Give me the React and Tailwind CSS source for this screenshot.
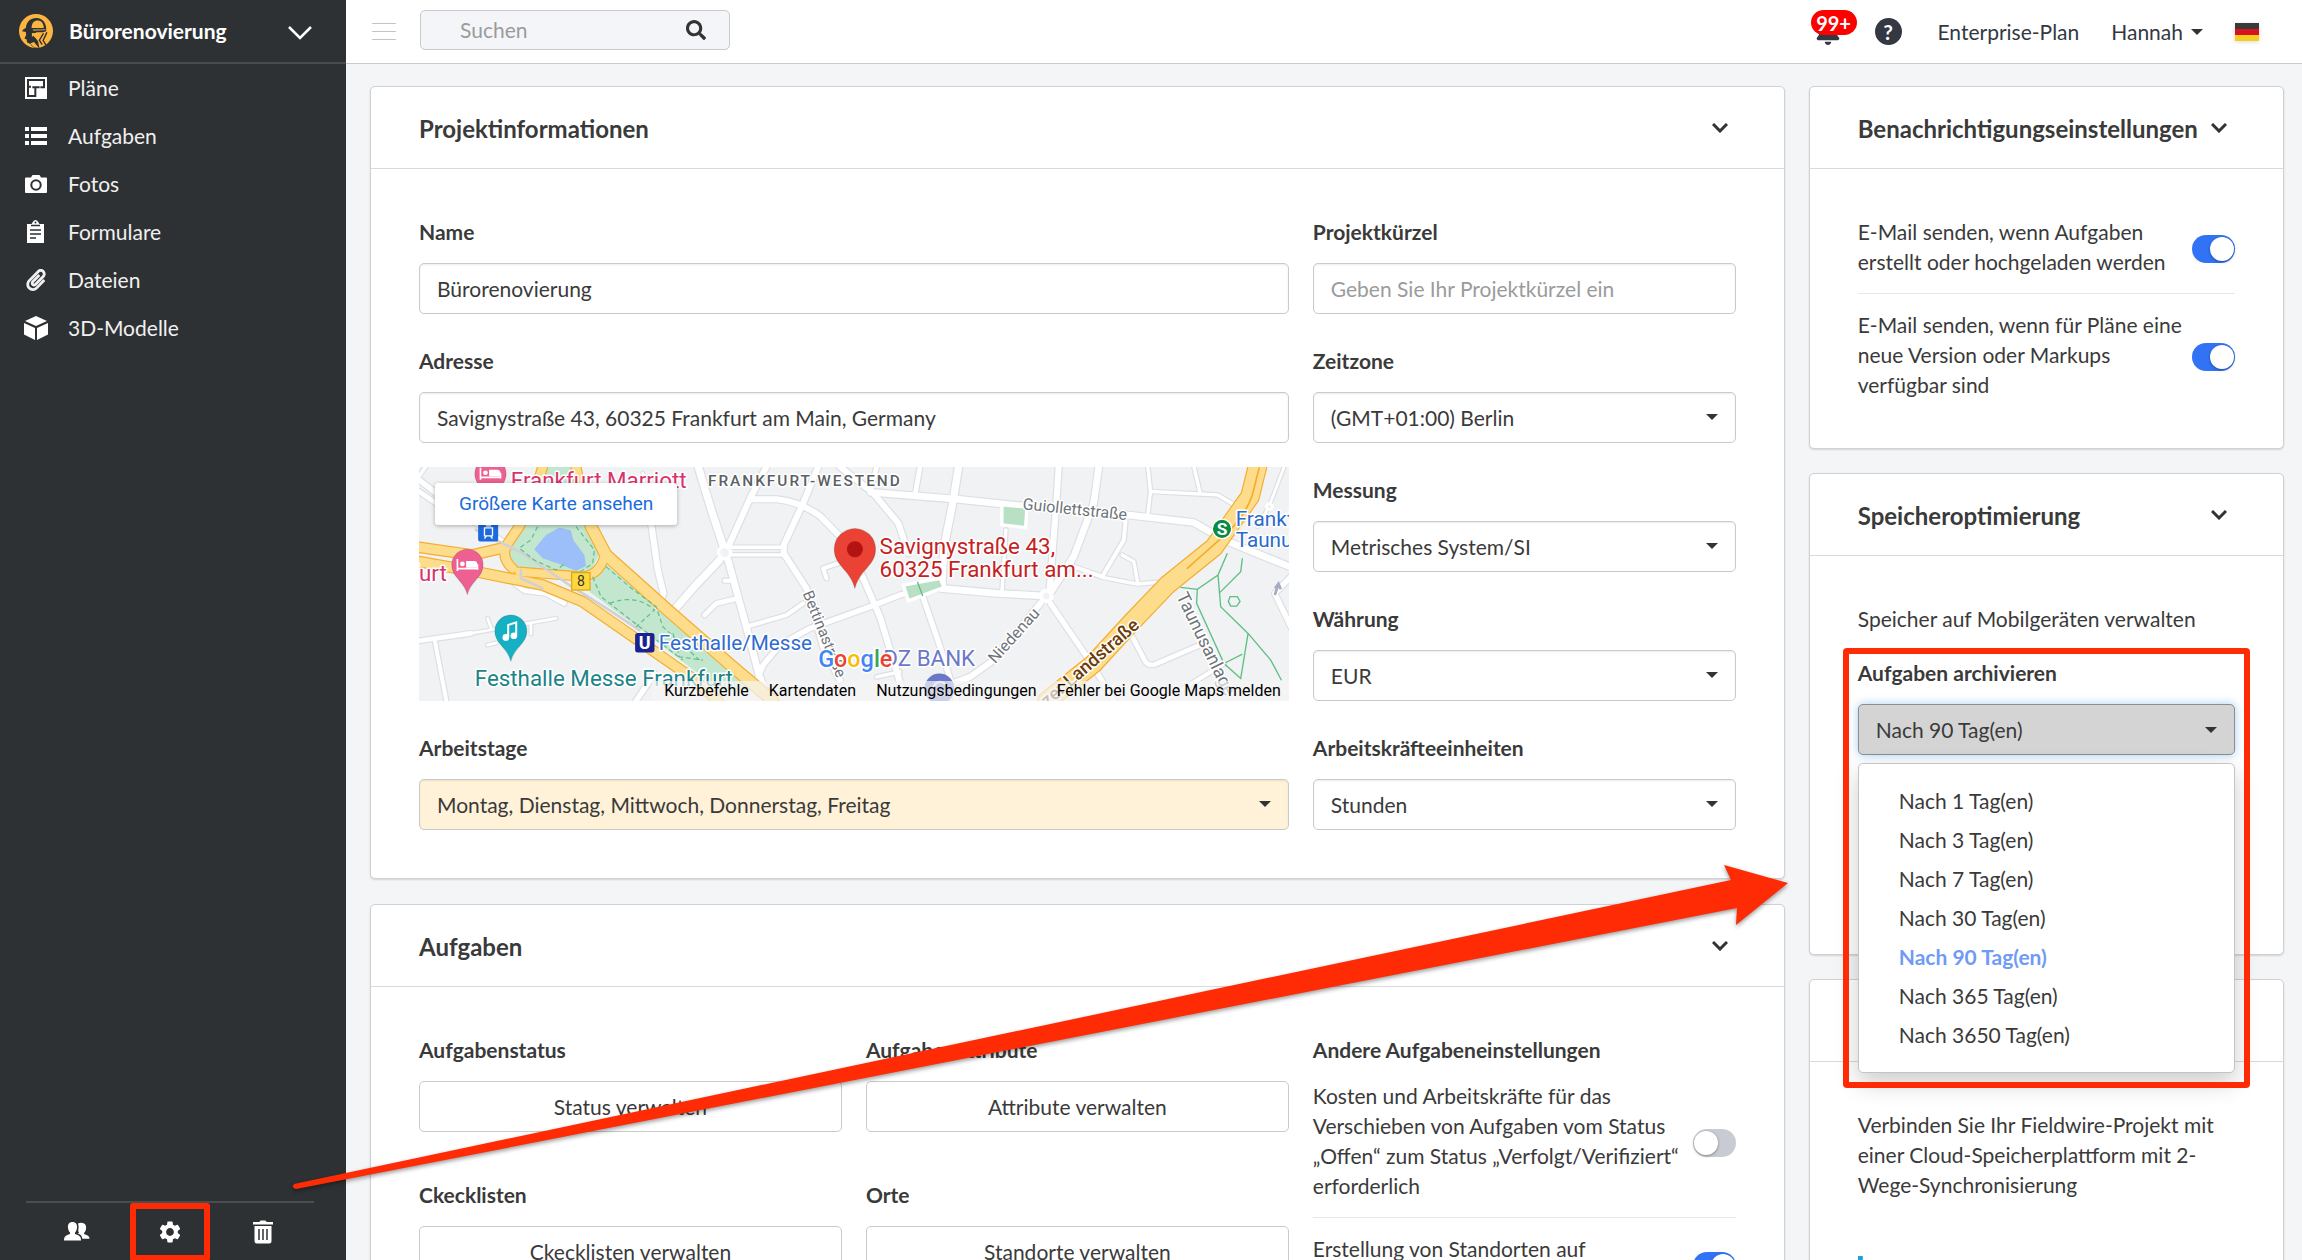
import React from "react";
import { FaSearch, FaPaperclip, FaBell } from "react-icons/fa";
import { MdSettings } from "react-icons/md";

/* ---------- Icons ---------- */

const LogoIcon = () => (
  <svg viewBox="0 0 100 100" className="size-[34px] shrink-0" aria-hidden="true">
    <circle cx="50" cy="50" r="50" fill="#fbb540" />
    <path d="M9 51Q12 43 20 41C22 22 36 11 52 12C70 13 79 27 80 42L80 51L70 54L52 54L44 58L46 66L56 80L60 100Q40 102 34 88L24 84L22 74L16 72L21 62L20 53Z" fill="#2e3134" />
    <path d="M37 41C37 26 45 19 55 19C67 19 72 29 73 41Z" fill="#fbb540" />
    <path d="M40 45L78 44L78 48L42 50Z" fill="#a9813c" />
    <path d="M38 56L70 57L60 68L56 78L42 64L38 68Z" fill="#fbb540" />
    <path d="M72 57L60 77L68 90M82 54L71 78L80 92" stroke="#2e3134" strokeWidth="4" fill="none" />
    <path d="M34 86L44 82L58 99Q42 101 34 86Z" fill="#fbb540" />
  </svg>
);

const PlanIcon = () => (
  <svg viewBox="0 0 66 66" className="size-[22px]" aria-hidden="true">
    <path d="M0 0H66V66H0Z" fill="#fff" />
    <path d="M6 6H60V34H46V28H54V12H12V26H18V32H12V54H28V34H22V28H44V34H34V60H6Z" fill="#2e3134" />
  </svg>
);

const ListIcon = () => (
  <svg viewBox="0 0 22 22" className="size-[22px]" fill="#fff" aria-hidden="true">
    <path d="M0 2h4v4H0zM6 2h16v4H6zM0 9h4v4H0zM6 9h16v4H6zM0 16h4v4H0zM6 16h16v4H6z" />
  </svg>
);

const CameraIcon = () => (
  <svg viewBox="0 0 22 22" className="size-[22px]" aria-hidden="true">
    <path fill="#fff" d="M1 4.500H6L7.500 2H14.500L16 4.500H21Q22 4.500 22 5.500V19Q22 20 21 20H1Q0 20 0 19V5.500Q0 4.500 1 4.500Z" />
    <circle cx="11" cy="12" r="4.700" fill="#fff" stroke="#2e3134" strokeWidth="2" />
  </svg>
);

const ClipboardIcon = () => (
  <svg viewBox="0 0 22 24" className="h-[24px] w-[22px]" aria-hidden="true">
    <path fill="#fff" d="M2 4H6Q7 4 7.500 2.500Q8.500 0 10.500 0Q12.500 0 13.500 2.500Q14 4 15 4H19V23H2Z" />
    <path d="M6 5.500H15M5 10H16M5 14H16M5 18H11" stroke="#2e3134" strokeWidth="1.600" />
    <circle cx="10.500" cy="2.600" r="1" fill="#2e3134" />
  </svg>
);

const CubeIcon = () => (
  <svg viewBox="0 0 24 24" className="size-[24px]" fill="#fff" aria-hidden="true">
    <path d="M12 0L23 5L12 10L1 5ZM0 7L11 12V24L0 18.500ZM24 7L13 12V24L24 18.500Z" />
  </svg>
);

const UsersIcon = () => (
  <svg viewBox="0 0 26 19" className="h-[19px] w-[26px]" fill="#fff" aria-hidden="true">
    <path d="M0 18.500C0 14 2 13.500 6 12V10.500C4.500 9 4.400 7.500 4 6C3.500 2 5.500 0 8.500 0S13.500 2 13 6C12.600 7.500 12.500 9 11 10.500V12C15 13.500 17 14 17 18.500Z" />
    <path d="M14 1.600Q16 0.500 18.500 1C21.500 1.500 22.500 4 22 7C21.700 8.600 21.500 9.500 20 11V12C24 13.500 25.500 14 25.500 16.800H18.300C18 13.500 16.500 12.800 14 11.600Q14.200 11 15.200 10.600C13.600 9.600 14.500 8 14.600 5.500Q14.600 3 14 1.600Z" />
  </svg>
);

const TrashIcon = () => (
  <svg viewBox="0 0 20 24" className="h-[24px] w-[20px]" aria-hidden="true">
    <path fill="#fff" d="M6.500 2Q6.500 0.500 8 0.500H12Q13.500 0.500 13.500 2H20V4.500H0V2ZM1.500 6H18.500V21Q18.500 23.500 16 23.500H4Q1.500 23.500 1.500 21Z" />
    <path d="M6 9V20M10 9V20M14 9V20" stroke="#2e3134" strokeWidth="1.500" />
  </svg>
);

const FlagIcon = () => (
  <svg viewBox="0 0 24 18" className="h-[18px] w-[24px] drop-shadow-sm" aria-hidden="true">
    <path d="M0 0H24V6H0Z" fill="#3a3a3a" />
    <path d="M0 6H24V12H0Z" fill="#d9131c" />
    <path d="M0 12H24V18H0Z" fill="#f6cf1c" />
  </svg>
);

const Caret = ({ className = "" }) => (
  <svg viewBox="0 0 12 6" className={`h-[6px] w-[12px] ${className}`} fill="#333" aria-hidden="true">
    <path d="M0 0H12L6 6Z" />
  </svg>
);

const Chevron = () => (
  <svg viewBox="0 0 16 10" className="h-[10px] w-[16px]" fill="none" stroke="#333" strokeWidth="3" aria-hidden="true">
    <path d="M1 1L8 8L15 1" />
  </svg>
);

/* ---------- Form parts ---------- */

const box = "h-[51px] w-full rounded-[5px] border border-[#c9cacc] bg-white px-[17px] text-[#3a3a3a]";

const Field = ({ id, label, children }) => (
  <div>
    <label htmlFor={id} className="mb-4 block font-bold">{label}</label>
    {children}
  </div>
);

const TextField = ({ id, label, ...rest }) => (
  <Field id={id} label={label}>
    <input id={id} type="text" className={`${box} shadow-[inset_0_1px_2px_rgba(0,0,0,0.08)] placeholder:text-[#9b9b9b]`} {...rest} />
  </Field>
);

const SelectField = ({ id, label, value, tint = false }) => (
  <Field id={id} label={label}>
    <div className="relative">
      <select id={id} className={`${box} appearance-none shadow-[inset_0_1px_2px_rgba(0,0,0,0.08)] ${tint ? "!bg-[#fff2d9]" : ""}`}>
        <option>{value}</option>
      </select>
      <Caret className="pointer-events-none absolute top-[22px] right-[18px]" />
    </div>
  </Field>
);

const ButtonField = ({ title, action }) => (
  <div>
    <h3 className="mb-4 font-bold">{title}</h3>
    <button type="button" className={`${box} text-center`}>{action}</button>
  </div>
);

const Toggle = ({ id, on = false }) => (
  <span className="relative mt-1 inline-flex h-[28px] w-[43px] shrink-0">
    <input id={id} type="checkbox" role="switch" defaultChecked={on} className="peer size-full appearance-none rounded-full bg-[#c8cbd1] checked:bg-[#3273f6]" />
    <span className="pointer-events-none absolute top-[2px] left-[1px] size-[24px] rounded-full bg-white shadow-[0_1px_3px_rgba(0,0,0,0.35)] peer-checked:left-[18px]" />
  </span>
);

const ToggleRow = ({ id, on, children, className = "" }) => (
  <div className={`flex items-center justify-between gap-2 ${className}`}>
    <label htmlFor={id} className="self-start">{children}</label>
    <Toggle id={id} on={on} />
  </div>
);

const Card = ({ title, children }) => (
  <section className="rounded-[5px] border border-[#cfd1d4] bg-white shadow-[0_1px_2px_rgba(0,0,0,0.14)]">
    <header className="flex h-[82px] items-center justify-between border-b border-[#d8dadc] pr-14 pl-12">
      <h2 className="pt-[2px] text-[24px] font-bold">{title}</h2>
      {title && (
        <button type="button" aria-label={`${title} einklappen`}>
          <Chevron />
        </button>
      )}
    </header>
    <div className="p-12">{children}</div>
  </section>
);

/* ---------- Map ---------- */

const roads = [
  [22, "M866 21L905 150L942 262"],
  [18, "M1070 21L1020 118L955 262"],
  [18, "M1020 118L1100 118Q1170 125 1230 168L1330 270"],
  [18, "M1225 21L1180 130L1122 255V280L1190 385L1240 560L1290 660"],
  [10, "M960 262H1120"],
  [10, "M960 285H1120"],
  [22, "M930 300L850 385L785 460"],
  [20, "M955 300L1010 500L1048 645L1080 722"],
  [12, "M945 362H970"],
  [18, "M1290 21L1390 100L1465 190L1495 280"],
  [20, "M1390 98L1640 118L1850 140L2150 165L2350 188L2440 240L2660 330"],
  [22, "M1645 21L1630 118L1602 260L1595 370"],
  [14, "M1530 21L1515 105"],
  [14, "M1400 21L1380 100"],
  [18, "M1945 21L1938 130L1918 390"],
  [20, "M2065 21L2050 130L1990 290L1922 395"],
  [10, "M2212 21L2220 95L2212 165"],
  [10, "M2220 95L2420 105L2480 140"],
  [10, "M2350 21L2368 98"],
  [12, "M2145 185L2140 240L2075 350L1990 320"],
  [10, "M2075 352L2180 372L2270 365"],
  [10, "M2135 285L2170 305L2182 370"],
  [20, "M1590 385L1760 400L1905 408"],
  [16, "M1380 440L1470 405L1600 370"],
  [18, "M1340 310L1410 470L1480 700"],
  [16, "M1540 415L1590 560L1640 722"],
  [18, "M1890 430L1750 600L1680 650L1600 680"],
  [16, "M1920 430L2050 620L2110 722"],
  [14, "M2160 520L2205 605Q2215 618 2235 612L2390 545"],
  [10, "M1787 210L1775 400"],
  [12, "M2260 722L2440 610"],
  [14, "M30 542L185 520"],
  [8, "M185 520L440 475M235 475L248 508M235 555L262 548M365 490V522"],
  [12, "M78 545L112 722"],
  [18, "M725 190L745 330L762 400L745 440"],
  [14, "M885 465L920 430L985 415"],
  [12, "M1010 500L1130 465L1180 430"],
  [16, "M1380 440L1200 505L1110 555L1060 615L1042 660"],
  [14, "M310 365L345 392L410 400L465 430"],
  [16, "M30 60L120 130L300 260"],
  [14, "M30 95L110 150"],
  [10, "M50 21L30 50"],
  [8, "M700 40L725 190"],
  [16, "M2645 345L2592 400L2650 520"],
  [8, "M2620 21L2575 140L2540 200"],
  [16, "M735 640L680 722"],
  [12, "M1250 355L1240 325L1300 305"],
  [10, "M1400 650L1470 635"],
];

const yellow = [
  [26, "M400 21L372 120L330 200L288 262Q280 300 310 325"],
  [26, "M500 21L520 120L545 195L585 285"],
  [24, "M585 290Q570 345 520 350L330 335"],
  [28, "M30 262L190 285L290 262"],
  [28, "M30 305L200 335L400 375L520 425L700 550L850 655L925 722"],
  [32, "M545 200L590 285L780 455L960 612L1090 722"],
  [52, "M2540 21L2518 110L2410 262L2270 375L2160 490L2050 610L1910 722"],
];

const halo = { paintOrder: "stroke", stroke: "#fff", strokeWidth: 9, strokeLinejoin: "round" };

const Pin = ({ x, y, r, fill, children }) => (
  <g transform={`translate(${x} ${y})`}>
    <path d={`M${-r} 0A${r} ${r} 0 0 1 ${r} 0C${r} ${r * 0.8} ${r * 0.2} ${r} 0 ${r * 1.9}C${-r * 0.2} ${r} ${-r} ${r * 0.8} ${-r} 0Z`} fill={fill} stroke="#0002" strokeWidth="3" />
    {children}
  </g>
);

const Bed = () => (
  <g>
    <path d="M-30 -18V18M-30 11H30M30 14V-2" stroke="#fff" strokeWidth="5" fill="none" />
    <path d="M-4 -12H20Q30 -12 30 0V8H-4Z" fill="#fff" />
    <circle cx="-15" cy="-3" r="7" fill="#fff" />
  </g>
);

const MapDrawing = () => (
  <svg viewBox="30 21 2604 702" preserveAspectRatio="xMidYMid slice" className="size-full" fontFamily="Roboto, sans-serif" role="img" aria-label="Karte von Frankfurt">
    <path d="M0 0H2700V750H0Z" fill="#f0f2f4" />
    <g fill="#c3e6cf">
      <path d="M405 21H500L540 195L570 280L540 345H330L295 290L335 195Z" />
      <path d="M585 310L545 365L540 395L690 505L820 605L930 690H1040L780 470Z" />
    </g>
    <path d="M410 225L450 203L485 212L492 240L525 285L530 318L500 332L450 312L400 295L375 268Z" fill="#9dbff9" />
    <g fill="none" strokeLinecap="round" strokeLinejoin="round">
      {roads.map(([w, d]) => <path key={d} d={d} stroke="#dcdfe4" strokeWidth={w + 7} />)}
      {roads.map(([w, d]) => <path key={d} d={d} stroke="#fff" strokeWidth={w} />)}
      {yellow.map(([w, d]) => <path key={d} d={d} stroke="#f5ad2e" strokeWidth={w + 7} />)}
      {yellow.map(([w, d]) => <path key={d} d={d} stroke="#fddd8c" strokeWidth={w} />)}
      <path d="M2545 25L2525 105Q2500 180 2420 245L2330 325" stroke="#f5ad2e" strokeWidth="5" />
      <path d="M200 210L340 280L480 375L600 450L690 510" stroke="#cfd1d4" strokeWidth="8" />
      <path d="M335 330V355L400 385" stroke="#cfd1d4" strokeWidth="8" />
    </g>
    <g fill="none" stroke="#5fbf83" strokeWidth="3.500" strokeDasharray="14 9">
      <path d="M385 200L365 240L330 265L375 300L440 330L470 310M500 200L555 270L550 310L500 345M590 320L660 380L740 440L760 500L870 600M550 350L575 410L690 500L820 600M600 430Q680 400 735 450L680 500M790 520L810 590L880 600" />
    </g>
    <g fill="none" stroke="#5fbf83" strokeWidth="4">
      <path d="M2450 280L2422 345L2360 388L2310 382M2360 388L2358 430L2440 610L2490 655L2512 520L2430 440L2422 345M2495 295L2490 335L2425 400M2440 610L2495 582M2512 520L2580 600L2612 660M2458 410H2480L2488 424L2478 438H2460L2453 424Z" />
    </g>
    <circle cx="945" cy="278" r="18" fill="#f0f2f4" stroke="#fff" strokeWidth="10" />
    <circle cx="1908" cy="408" r="16" fill="#f0f2f4" stroke="#fff" strokeWidth="12" />
    <circle cx="2576" cy="140" r="9" fill="#f0f2f4" stroke="#fff" strokeWidth="8" />
    <path d="M1775 135L1850 142L1846 203L1775 195Z" fill="#b9dfc5" stroke="#fff" strokeWidth="10" />
    <path d="M1480 375L1590 355L1602 382L1495 422Z" fill="#b9dfc5" stroke="#fff" strokeWidth="10" />
    <path d="M1522 365L1538 408" stroke="#5fbf83" strokeWidth="4" />
    <path d="M2592 405L2602 375M2593 385L2603 371L2610 388" stroke="#a7abc6" strokeWidth="8" fill="none" />

    <g style={halo} fontSize="48" fill="#6f7479">
      <text transform="translate(1178 400) rotate(68)" fontSize="46">Bettinastraße</text>
      <text transform="translate(1836 148) rotate(6)">Guiollettstraße</text>
      <text transform="translate(1755 612) rotate(-48)">Niedenau</text>
      <text transform="translate(2296 408) rotate(64)" fontSize="54">Taunusanlage</text>
      <text transform="translate(2190 500) rotate(-41)" fontSize="55" textAnchor="end" fill="#6b3d08" fontWeight="500">zer Landstraße</text>
      <text x="895" y="80" fontSize="46" fill="#5a5f64" fontWeight="500" letterSpacing="6">FRANKFURT-WESTEND</text>
    </g>
    <g style={halo} fontSize="67">
      <text x="305" y="85" fill="#d8336c">Frankfurt Marriott</text>
      <text x="113" y="362" textAnchor="end" fill="#d8336c">furt</text>
      <text x="748" y="571" fill="#2f6bd0" fontSize="62">Festhalle/Messe</text>
      <text x="197" y="677" fill="#1b8488">Festhalle Messe Frankfurt</text>
      <text x="1409" y="282" fill="#c5221f">Savignystraße 43,</text>
      <text x="1409" y="351" fill="#c5221f">60325 Frankfurt am...</text>
      <text x="2475" y="197" fill="#2a6acb" fontSize="62">Frankfurt</text>
      <text x="2475" y="260" fill="#2a6acb" fontSize="62">Taunusanlage</text>
      <text x="1420" y="619" fill="#6b78c8">DZ BANK</text>
    </g>

    <Pin x={244} y={42} r={47} fill="#ee5f92"><Bed /></Pin>
    <Pin x={175} y={315} r={47} fill="#ee5f92"><Bed /></Pin>
    <Pin x={305} y={513} r={48} fill="#16b0c4">
      <path d="M-8 18V-18L16 -26V12" stroke="#fff" strokeWidth="6" fill="none" />
      <circle cx="-15" cy="19" r="10" fill="#fff" />
      <circle cx="9" cy="14" r="10" fill="#fff" />
    </Pin>
    <Pin x={1335} y={268} r={62} fill="#ea4335"><circle r="24" fill="#b31412" /></Pin>
    <circle cx="1588" cy="685" r="45" fill="#6b78c8" />
    <path d="M1605 672A20 20 0 1 0 1605 698" stroke="#cfd4f2" strokeWidth="7" fill="none" />
    <rect x="207" y="185" width="60" height="60" rx="8" fill="#1d69de" />
    <path d="M226 204H250V228H226ZM232 228L226 236M244 228L250 236M230 198H246" stroke="#fff" strokeWidth="4" fill="none" />
    <rect x="487" y="338" width="55" height="52" fill="#ffd93b" stroke="#e0ab1a" strokeWidth="4" />
    <text x="515" y="379" fontSize="42" textAnchor="middle" fill="#333">8</text>
    <rect x="677" y="519" width="58" height="58" rx="8" fill="#1a2390" />
    <text x="706" y="568" fontSize="54" fontWeight="700" textAnchor="middle" fill="#fff">U</text>
    <circle cx="2434" cy="207" r="29" fill="#0b8a45" stroke="#fff" strokeWidth="4" />
    <text x="2434" y="226" fontSize="52" fontWeight="700" textAnchor="middle" fill="#fff">S</text>
    <text x="1225" y="620" fontSize="70" fontWeight="500" style={halo}>
      <tspan fill="#4285f4">G</tspan><tspan fill="#ea4335">o</tspan><tspan fill="#fbbc05">o</tspan><tspan fill="#4285f4">g</tspan><tspan fill="#34a853">l</tspan><tspan fill="#ea4335">e</tspan>
    </text>
  </svg>
);

const mapLinks = ["Kurzbefehle", "Kartendaten", "Nutzungsbedingungen", "Fehler bei Google Maps melden"];

const LocationMap = () => (
  <div className="relative mt-6 h-[234px] overflow-hidden font-['Roboto',sans-serif]">
    <MapDrawing />
    <a href="#karte" className="absolute top-4 left-4 flex h-[42px] items-center rounded-[3px] bg-white px-6 text-[19px] text-[#1a6bdc] shadow-[0_1px_4px_rgba(0,0,0,0.3)]">
      Größere Karte ansehen
    </a>
    <div className="absolute right-0 bottom-0 flex h-[20px] items-center gap-5 bg-[#f5f5f5]/70 pr-2 pl-3 text-[16px] text-black">
      {mapLinks.map((t) => <a key={t} href="#karte">{t}</a>)}
    </div>
  </div>
);

/* ---------- Page regions ---------- */

const navItems = [
  ["Pläne", <PlanIcon />],
  ["Aufgaben", <ListIcon />],
  ["Fotos", <CameraIcon />],
  ["Formulare", <ClipboardIcon />],
  ["Dateien", <FaPaperclip className="size-[22px]" />],
  ["3D-Modelle", <CubeIcon />],
];

const Sidebar = () => (
  <aside className="flex w-[346px] shrink-0 flex-col bg-[#2e3134] text-white">
    <button type="button" className="flex h-[64px] w-full items-center gap-4 border-b-2 border-[#484b4f] pr-[34px] pl-[19px] text-left font-bold">
      <LogoIcon />
      <span className="flex-1">Bürorenovierung</span>
      <svg viewBox="0 0 24 14" className="mt-1 h-[14px] w-[24px]" fill="none" stroke="#fff" strokeWidth="2.500" aria-hidden="true">
        <path d="M1 1L12 12L23 1" />
      </svg>
    </button>
    <nav className="flex-1">
      {navItems.map(([name, icon]) => (
        <a key={name} href="#bereich" className="flex h-12 items-center gap-5 pl-6 text-[#f0f0f0]">
          <span className="flex w-6 justify-center">{icon}</span>
          {name}
        </a>
      ))}
    </nav>
    <div className="mx-[26px] mr-8 grid h-[59px] grid-cols-3 items-center border-t-2 border-[#4a4d50] px-1">
      <button type="button" aria-label="Personen" className="flex justify-center"><UsersIcon /></button>
      <button type="button" aria-label="Einstellungen" className="flex justify-center">
        <span className="-my-4 flex h-[58px] w-[80px] shrink-0 items-center justify-center rounded-[3px] border-6 border-[#fe2b05]">
          <MdSettings className="size-[26px]" />
        </span>
      </button>
      <button type="button" aria-label="Papierkorb" className="flex justify-center"><TrashIcon /></button>
    </div>
  </aside>
);

const TopBar = () => (
  <header className="flex h-[64px] shrink-0 items-center border-b border-[#c9cacc] bg-white pr-[43px] pl-[26px]">
    <button type="button" aria-label="Menü" className="flex w-6 flex-col gap-[7px]">
      <span className="h-px bg-[#c4c4c4]" />
      <span className="h-px bg-[#c4c4c4]" />
      <span className="h-px bg-[#c4c4c4]" />
    </button>
    <div className="relative mb-1 ml-6 w-[310px]">
      <input type="search" aria-label="Suchen" placeholder="Suchen" className="h-10 w-full rounded-[5px] border border-[#c9cacc] bg-[#f4f5f8] pr-12 pl-[39px] placeholder:text-[#9b9b9b]" />
      <FaSearch className="absolute top-[10px] right-6 size-[20px] text-[#333]" />
    </div>
    <div className="ml-auto flex items-center text-[#333842]">
      <button type="button" aria-label="Mitteilungen" className="relative mb-2 flex h-[35px] w-[46px] items-end pl-1">
        <FaBell className="size-[26px]" />
        <span className="absolute top-0 left-0 flex h-[25px] w-[46px] items-center justify-center rounded-full bg-[#fd0000] text-[20px] font-bold text-white">99+</span>
      </button>
      <button type="button" aria-label="Hilfe" className="ml-[18px] flex size-[27px] items-center justify-center rounded-full bg-[#333842] font-bold text-white">?</button>
      <a href="#plan" className="ml-9">Enterprise-Plan</a>
      <button type="button" className="ml-8 flex items-center gap-2">Hannah <Caret /></button>
      <button type="button" aria-label="Sprache: Deutsch" className="ml-8"><FlagIcon /></button>
    </div>
  </header>
);

const options = ["1", "3", "7", "30", "90", "365", "3650"];

const ArchiveSelect = () => (
  <div className="relative mt-6">
    <h3 id="archive" className="mb-4 font-bold">Aufgaben archivieren</h3>
    <button type="button" aria-labelledby="archive" aria-haspopup="listbox" aria-expanded="true" className="flex h-[51px] w-full items-center justify-between rounded-[5px] border border-[#8b8d90] bg-[#d4d4d4] px-[17px] shadow-[0_0_10px_rgba(102,175,233,0.6)]">
      Nach 90 Tag(en)
      <Caret />
    </button>
    <div className="mt-[100px] h-[51px] rounded-[5px] border border-[#c9cacc]" />
    <ul role="listbox" aria-labelledby="archive" className="absolute top-[105px] right-0 left-0 z-10 rounded-[5px] border border-[#c3c4c6] bg-white pt-[17px] pb-[18px] shadow-[0_10px_24px_rgba(0,0,0,0.2)]">
      {options.map((d) => (
        <li key={d} role="option" aria-selected={d === "90"} className="flex h-[39px] items-center pl-10 aria-selected:font-bold aria-selected:text-[#6f9bf5]">
          Nach {d} Tag(en)
        </li>
      ))}
    </ul>
    <div className="pointer-events-none absolute -top-[10px] -right-[15px] -left-[15px] z-20 h-[440px] rounded-[4px] border-6 border-[#fe2b05]" />
  </div>
);

const Arrow = () => (
  <svg viewBox="290 860 1504 336" className="pointer-events-none absolute top-[860px] left-[290px] z-30 h-[336px] w-[1504px] drop-shadow-[0_2px_2px_rgba(0,0,0,0.4)]" aria-hidden="true">
    <path d="M294 1184L1731 880L1724 865L1788 883L1736 925L1737 908L296 1189Q291 1188 294 1184Z" fill="#fe2b05" />
  </svg>
);

export default function App() {
  return (
    <div className="relative flex h-screen overflow-hidden bg-[#f4f5f7] font-['Lato',sans-serif] text-[21px] leading-[30px] text-[#3a3a3a]">
      <Sidebar />
      <div className="flex min-w-0 flex-1 flex-col">
        <TopBar />
        <main className="grid min-h-0 flex-1 grid-cols-[1414fr_475fr] items-start gap-6 pt-[22px] pr-[18px] pl-6">
          <div className="flex flex-col gap-[25px]">
            <Card title="Projektinformationen">
              <div className="grid grid-cols-3 gap-6">
                <div className="col-span-2 flex flex-col gap-8">
                  <TextField id="name" label="Name" defaultValue="Bürorenovierung" />
                  <div>
                    <TextField id="adresse" label="Adresse" defaultValue="Savignystraße 43, 60325 Frankfurt am Main, Germany" />
                    <LocationMap />
                  </div>
                  <SelectField id="tage" label="Arbeitstage" value="Montag, Dienstag, Mittwoch, Donnerstag, Freitag" tint />
                </div>
                <div className="flex flex-col gap-8">
                  <TextField id="kuerzel" label="Projektkürzel" placeholder="Geben Sie Ihr Projektkürzel ein" />
                  <SelectField id="zeitzone" label="Zeitzone" value="(GMT+01:00) Berlin" />
                  <SelectField id="messung" label="Messung" value="Metrisches System/SI" />
                  <SelectField id="waehrung" label="Währung" value="EUR" />
                  <SelectField id="einheiten" label="Arbeitskräfteeinheiten" value="Stunden" />
                </div>
              </div>
            </Card>
            <Card title="Aufgaben">
              <div className="grid grid-cols-3 items-start gap-6">
                <div className="col-span-2 grid grid-cols-2 gap-x-6 gap-y-12">
                  <ButtonField title="Aufgabenstatus" action="Status verwalten" />
                  <ButtonField title="Aufgabenattribute" action="Attribute verwalten" />
                  <ButtonField title="Ckecklisten" action="Ckecklisten verwalten" />
                  <ButtonField title="Orte" action="Standorte verwalten" />
                </div>
                <div>
                  <h3 className="mb-4 font-bold">Andere Aufgabeneinstellungen</h3>
                  <ToggleRow id="kosten" className="border-b border-[#e6e7e9] pb-4">
                    Kosten und Arbeitskräfte für das Verschieben von Aufgaben vom Status „Offen“ zum Status „Verfolgt/Verifiziert“ erforderlich
                  </ToggleRow>
                  <ToggleRow id="standorte" on className="min-h-[76px] pt-4">
                    Erstellung von Standorten auf
                  </ToggleRow>
                </div>
              </div>
            </Card>
          </div>
          <div className="flex flex-col gap-6">
            <Card title="Benachrichtigungseinstellungen">
              <ToggleRow id="mail1" on className="border-b border-[#e6e7e9] pb-4">
                E-Mail senden, wenn Aufgaben erstellt oder hochgeladen werden
              </ToggleRow>
              <ToggleRow id="mail2" on className="pt-4">
                E-Mail senden, wenn für Pläne eine neue Version oder Markups verfügbar sind
              </ToggleRow>
            </Card>
            <Card title="Speicheroptimierung">
              <p>Speicher auf Mobilgeräten verwalten</p>
              <ArchiveSelect />
            </Card>
            <Card title="">
              <p>Verbinden Sie Ihr Fieldwire-Projekt mit einer Cloud-Speicherplattform mit 2-Wege-Synchronisierung</p>
              <svg viewBox="0 0 120 40" className="mt-14 h-[40px] w-[120px]" fill="#1ba4dc" aria-hidden="true">
                <circle cx="2" cy="2" r="3" />
                <path d="M0 2H4V40H0Z" />
              </svg>
            </Card>
          </div>
        </main>
      </div>
      <Arrow />
    </div>
  );
}
